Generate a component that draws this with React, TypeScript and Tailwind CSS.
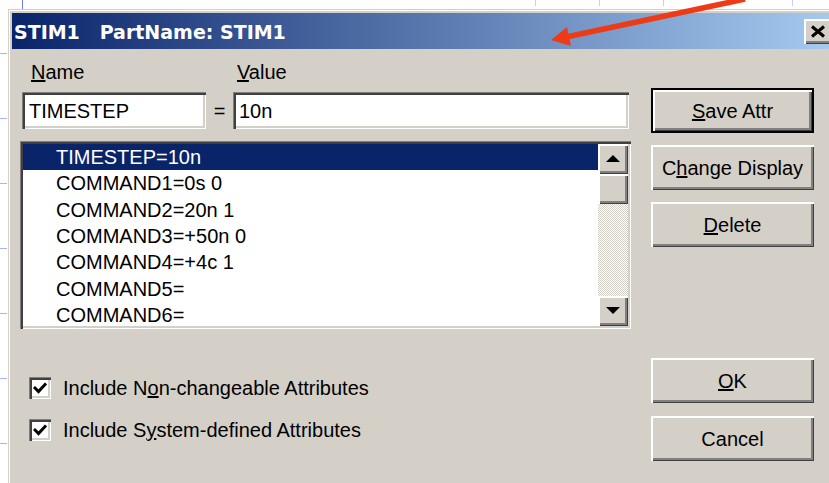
import { FC, ReactNode } from "react";

// Win2000-style bevels, drawn with inset shadows
const raised =
  "shadow-[inset_2px_2px_0_#ffffff,inset_-1px_-1px_0_#404040,inset_-3px_-3px_0_#808080]";
const sunken =
  "shadow-[inset_1px_1px_0_#808080,inset_3px_3px_0_#404040,inset_-1px_-1px_0_#ffffff,inset_-3px_-3px_0_#d4d0c8]";

const sans = "font-['Liberation_Sans',Arial,sans-serif]";

const attributes = [
  "TIMESTEP=10n",
  "COMMAND1=0s 0",
  "COMMAND2=20n 1",
  "COMMAND3=+50n 0",
  "COMMAND4=+4c 1",
  "COMMAND5=",
  "COMMAND6=",
];

const DialogButton: FC<{ children: ReactNode; isDefault?: boolean }> = ({
  children,
  isDefault,
}) => (
  <div
    className={`h-[45px] w-full flex items-center justify-center bg-[#d4d0c8] text-[20px] text-black ${
      isDefault ? "border-2 border-black" : ""
    } ${raised}`}
  >
    {children}
  </div>
);

const CheckRow: FC<{ children: ReactNode }> = ({ children }) => (
  <div className="h-[26px] flex items-center pl-[9px]">
    <div className={`w-[22px] h-[22px] bg-white flex items-center justify-center ${sunken}`}>
      <svg width="14" height="12" viewBox="0 0 14 12">
        <polyline
          points="2,6 5.5,9.5 12,2.5"
          fill="none"
          stroke="#000"
          strokeWidth="3"
          strokeLinejoin="miter"
          strokeLinecap="square"
        />
      </svg>
    </div>
    <span className="ml-[12px] text-[20px] text-black">{children}</span>
  </div>
);

const ScrollArrow: FC<{ up?: boolean }> = ({ up }) => (
  <div className={`h-[30px] flex items-center justify-center bg-[#d4d0c8] ${raised}`}>
    <svg width="14" height="8" viewBox="0 0 14 8">
      {up ? (
        <polygon points="7,0 14,7 0,7" fill="#000" />
      ) : (
        <polygon points="0,0 14,0 7,7" fill="#000" />
      )}
    </svg>
  </div>
);

const App: FC = () => {
  const topTicks = [535, 599, 663, 728, 792];
  const sideDashes = [53, 118, 183, 248, 313, 378, 443];

  return (
    <div className={`relative w-[829px] h-[483px] overflow-hidden bg-white ${sans}`}>
      {/* canvas grid behind the dialog */}
      <div className="absolute left-[22px] top-0 w-px h-[9px] bg-[#6f7fe8]" />
      {topTicks.map((x) => (
        <div
          key={x}
          className="absolute top-0 w-px h-[6px] bg-[#c9d1f2]"
          style={{ left: x }}
        />
      ))}
      {sideDashes.map((y) => (
        <div
          key={y}
          className="absolute left-0 w-[7px] h-px bg-[#aab6ea]"
          style={{ top: y }}
        />
      ))}

      {/* dialog window */}
      <div className="ml-[8px] mt-[9px] w-[827px] h-[480px] bg-[#d4d0c8] border-l border-t border-[#d4d0c8] shadow-[inset_1px_1px_0_#ffffff] pl-[3px] pt-[3px]">
        <div className="h-[36px] flex items-center justify-between bg-[linear-gradient(to_right,#0a246a,#a6caf0)]">
          <span className="pl-[2px] pt-[3px] text-[19px] font-bold text-white font-['DejaVu_Sans',sans-serif] whitespace-pre">
            {"STIM1   PartName: STIM1"}
          </span>
          <div className={`mr-[3px] w-[28px] h-[25px] flex items-center justify-center bg-[#d4d0c8] ${raised}`}>
            <svg width="16" height="13" viewBox="0 0 16 13">
              <path d="M2 1.5 L14 11.5 M14 1.5 L2 11.5" stroke="#000" strokeWidth="3" />
            </svg>
          </div>
        </div>

        <div className="flex pl-[8px]">
          {/* left column: fields, list, options */}
          <div className="w-[611px] flex flex-col">
            <div className="mt-[11px] h-[23px] flex items-center text-[20px] text-black">
              <span className="w-[213px] pl-[11px]">
                <u>N</u>ame
              </span>
              <span className="pl-[4px]">
                <u>V</u>alue
              </span>
            </div>

            <div className="mt-[9px] h-[37px] flex pl-[2px] text-[20px] text-black">
              <div className={`w-[184px] bg-white flex items-center pl-[7px] ${sunken}`}>
                TIMESTEP
              </div>
              <div className="w-[27px] flex items-center justify-center">=</div>
              <div className={`w-[396px] bg-white flex items-center pl-[6px] ${sunken}`}>
                10n
              </div>
            </div>

            <div className={`mt-[12px] h-[188px] bg-white p-[3px] flex ${sunken}`}>
              <div className="flex-1 overflow-hidden text-[20px]">
                {attributes.map((item, i) => (
                  <div
                    key={item}
                    className={`h-[26.3px] flex items-center pl-[33px] ${
                      i === 0 ? "bg-[#0a246a] text-white" : "text-black"
                    }`}
                  >
                    {item}
                  </div>
                ))}
              </div>
              <div className="w-[30px] flex flex-col">
                <ScrollArrow up />
                <div className={`h-[30px] bg-[#d4d0c8] ${raised}`} />
                <div className="flex-1 bg-[repeating-conic-gradient(#ffffff_0_25%,#d4d0c8_0_50%)] bg-[length:2px_2px]" />
                <ScrollArrow />
              </div>
            </div>

            <div className="mt-[46px] flex flex-col gap-[16px]">
              <CheckRow>
                Include N<u>o</u>n-changeable Attributes
              </CheckRow>
              <CheckRow>
                Include S<u>y</u>stem-defined Attributes
              </CheckRow>
            </div>
          </div>

          {/* right column: command buttons */}
          <div className="ml-[20px] w-[163px] flex flex-col pt-[39px]">
            <DialogButton isDefault>
              <span>
                <u>S</u>ave Attr
              </span>
            </DialogButton>
            <div className="mt-[12px]">
              <DialogButton>
                <span>
                  C<u>h</u>ange Display
                </span>
              </DialogButton>
            </div>
            <div className="mt-[12px]">
              <DialogButton>
                <span>
                  <u>D</u>elete
                </span>
              </DialogButton>
            </div>
            <div className="mt-[111px]">
              <DialogButton>
                <span>
                  <u>O</u>K
                </span>
              </DialogButton>
            </div>
            <div className="mt-[13px]">
              <DialogButton>Cancel</DialogButton>
            </div>
          </div>
        </div>
      </div>

      {/* annotation arrow pointing at the title bar */}
      <svg className="absolute inset-0 pointer-events-none" width="829" height="483">
        <line x1="745" y1="-1" x2="566" y2="37" stroke="#ee3b17" strokeWidth="5.5" />
        <polygon points="551,40 567,27 571,46" fill="#ee3b17" />
      </svg>
    </div>
  );
};

export default App;
